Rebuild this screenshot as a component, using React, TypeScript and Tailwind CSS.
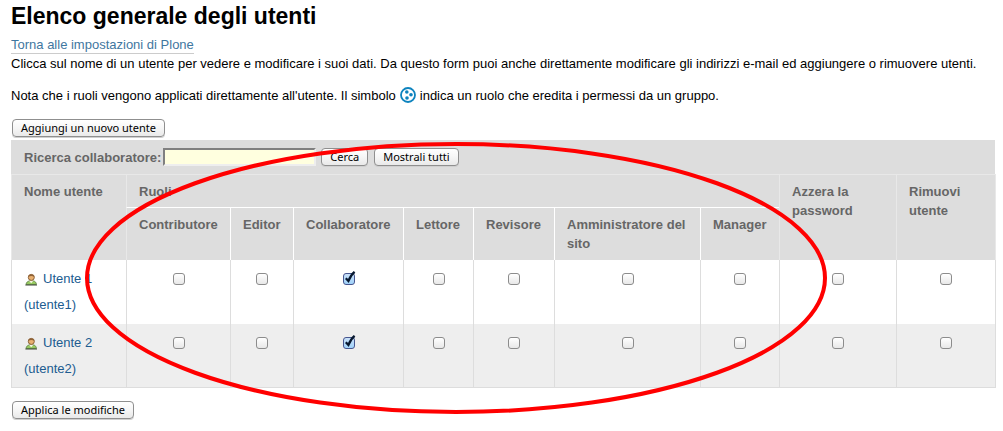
import React, { useState } from 'react';

const ROLES = ['Contributore', 'Editor', 'Collaboratore', 'Lettore', 'Revisore', 'Amministratore del sito', 'Manager'];
const COLUMNS = [...ROLES, 'Azzera la password', 'Rimuovi utente'];

const USERS = [
  { name: 'Utente 1', login: 'utente1', granted: ['Collaboratore'] },
  { name: 'Utente 2', login: 'utente2', granted: ['Collaboratore'] },
];

function GroupIcon() {
  return (
    <svg viewBox="0 0 16 16" role="img" aria-label="gruppo" className="mx-1 inline-block size-4 align-text-bottom">
      <circle cx="8" cy="8" r="7" fill="#fff" stroke="#0d83be" strokeWidth="1.8" />
      <g fill="#0d83be">
        <circle cx="6.8" cy="5" r="1.8" />
        <circle cx="11" cy="7.8" r="1.8" />
        <circle cx="7" cy="11" r="1.8" />
      </g>
    </svg>
  );
}

function UserIcon() {
  return (
    <svg viewBox="0 0 14 13" aria-hidden="true" className="h-[13px] w-[14px]">
      <path d="M2 11.4 C2.4 9.4 3.6 8.3 5.2 8 L9.6 8 C11.4 8.4 12.2 9.6 12.4 11.4 Z" fill="#9bcf62" stroke="#6d9150" strokeWidth="1" />
      <path d="M5.2 8 L7.2 10.2 L9.2 8 Z" fill="#f5f5e4" />
      <circle cx="7.3" cy="4.4" r="3" fill="#e9b070" stroke="#8a6036" strokeWidth="1" />
      <path d="M4.2 3.8 C4.4 0.6 10.2 0.6 10.4 3.8 C8.8 2.8 6.2 2.6 4.2 3.8 Z" fill="#8f6236" />
      <path d="M1.4 12 H13" stroke="#3f4837" strokeWidth="1" />
    </svg>
  );
}

function PushButton({ children }: { children: React.ReactNode }) {
  return (
    <button
      type="button"
      className="h-[18px] rounded border border-[#8f8f8f] bg-linear-to-b from-white via-[#f6f6f6] to-[#e9e9e9] px-2 font-['Noto_Sans','Open_Sans',sans-serif] text-[11px] leading-4 font-normal text-black shadow-[0_1px_0_#cfcfcf]"
    >
      {children}
    </button>
  );
}

function Tick({ label, initial }: { label: string; initial: boolean }) {
  const [on, setOn] = useState(initial);
  return (
    <span className="relative mx-auto mt-[6px] block size-3">
      <input
        type="checkbox"
        aria-label={label}
        checked={on}
        onChange={(e) => setOn(e.target.checked)}
        className="peer block size-3 appearance-none rounded-[3px] border border-[#8c8c8c] bg-linear-to-b from-white to-[#e8e8e8] checked:border-[#47568f] checked:from-[#c9e0f8] checked:to-[#9fd2fa]"
      />
      <svg viewBox="0 0 14 14" aria-hidden="true" className="pointer-events-none absolute -top-[2px] left-0 hidden size-[14px] peer-checked:block">
        <path d="M2.8 7.2 L5.4 10 C6.6 7 8.6 3.2 11.6 0.8" fill="none" stroke="#07182f" strokeWidth="2.2" />
      </svg>
    </span>
  );
}

export default function App() {
  return (
    <main className="relative min-h-screen overflow-hidden bg-white pr-[7px] pl-[11px] font-['Liberation_Sans',Arial,sans-serif] text-[13px] leading-[19px] text-black">
      <h1 className="pt-[2px] text-[23px] leading-7 font-bold">Elenco generale degli utenti</h1>
      <div className="mt-[5px] h-[19px]">
        <a href="#impostazioni" className="inline-block border-b border-[#ccc] leading-4 text-[#3f77a0]">
          Torna alle impostazioni di Plone
        </a>
      </div>
      <p>Clicca sul nome di un utente per vedere e modificare i suoi dati. Da questo form puoi anche direttamente modificare gli indirizzi e-mail ed aggiungere o rimuovere utenti.</p>
      <p className="mt-[13px]">
        Nota che i ruoli vengono applicati direttamente all'utente. Il simbolo
        <GroupIcon />
        indica un ruolo che eredita i permessi da un gruppo.
      </p>
      <div className="mt-[14px] flex px-px">
        <PushButton>Aggiungi un nuovo utente</PushButton>
      </div>

      <table className="mt-[3px] w-full table-fixed border-separate border-spacing-0 text-left">
        <colgroup>
          <col className="w-[115px]" />
          <col className="w-[104px]" />
          <col className="w-[63px]" />
          <col className="w-[110px]" />
          <col className="w-[70px]" />
          <col className="w-[81px]" />
          <col className="w-[146px]" />
          <col className="w-[79px]" />
          <col className="w-[117px]" />
          <col className="w-[100px]" />
        </colgroup>
        <thead className="align-top text-[#666]">
          <tr>
            <th colSpan={10} className="h-[34px] border-r border-r-white bg-[#ddd] p-0 align-middle">
              <div className="flex items-center pl-[13px]">
                <label htmlFor="ricerca">Ricerca collaboratore:</label>
                <input
                  id="ricerca"
                  type="text"
                  className="ml-[2px] h-[18px] w-[153px] border-2 border-t-[#808080] border-r-[#eee] border-b-[#eee] border-l-[#808080] bg-[#ffffdf] px-1 text-[11px] font-normal text-black"
                />
                <div className="ml-[5px] flex gap-[6px]">
                  <PushButton>Cerca</PushButton>
                  <PushButton>Mostrali tutti</PushButton>
                </div>
              </div>
            </th>
          </tr>
          <tr className="h-[33px]">
            <th rowSpan={2} className="border-t border-l border-[#e8e8e8] bg-[#ddd] px-3 py-[7px]">Nome utente</th>
            <th colSpan={7} className="border-t border-l border-[#e8e8e8] bg-[#ddd] px-3 pt-[7px] pb-[6px]">Ruoli</th>
            <th rowSpan={2} className="border-t border-l border-[#e8e8e8] bg-[#ddd] px-3 py-[7px]">Azzera la password</th>
            <th rowSpan={2} className="border-t border-x border-[#e8e8e8] bg-[#ddd] px-3 py-[7px]">Rimuovi utente</th>
          </tr>
          <tr className="h-[53px]">
            {ROLES.map((role) => (
              <th key={role} className="border-t border-l border-white bg-[#ddd] px-3 pt-[7px] first:border-l-[#e8e8e8]">
                {role}
              </th>
            ))}
          </tr>
        </thead>
        <tbody className="align-top">
          {USERS.map((user) => (
            <tr key={user.login} className="h-16 even:bg-[#eee] last:[&>*]:border-b">
              <td className="border-l border-[#ddd] px-3 pt-[6px]">
                <a href={`#${user.login}`} className="block leading-[26px] whitespace-nowrap text-[#205c90]">
                  <span className="flex items-center gap-[5px]">
                    <UserIcon />
                    {user.name}
                  </span>
                  ({user.login})
                </a>
              </td>
              {COLUMNS.map((col) => (
                <td key={col} className="border-l border-[#ddd] pt-[7px] last:border-r">
                  <Tick label={`${col}: ${user.name}`} initial={user.granted.includes(col)} />
                </td>
              ))}
            </tr>
          ))}
        </tbody>
      </table>

      <div className="mt-[13px] flex px-px">
        <PushButton>Applica le modifiche</PushButton>
      </div>

      <svg viewBox="0 0 744 274" aria-hidden="true" className="pointer-events-none absolute top-[141px] left-[84px] h-[274px] w-[744px]">
        <ellipse cx="372" cy="137" rx="369" ry="134" fill="none" stroke="#f00" strokeWidth="4" />
      </svg>
    </main>
  );
}
